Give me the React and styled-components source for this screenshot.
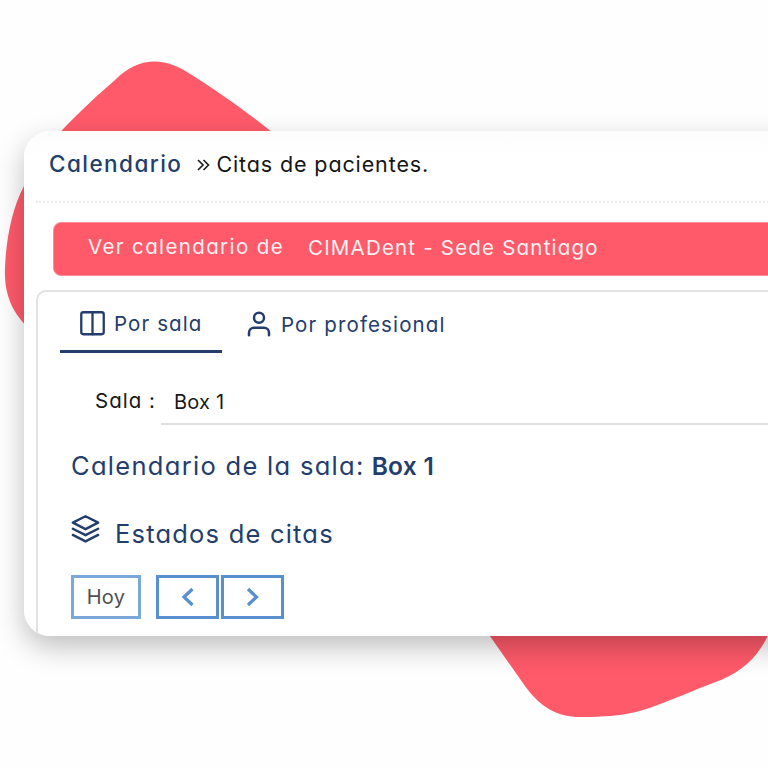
import React from "react";
import styled, { createGlobalStyle } from "styled-components";

const navy = "#233d6d";
const coral = "#ff5a6a";

const GlobalStyle = createGlobalStyle`
  * { box-sizing: border-box; }
  body { margin: 0; background: #fefefe; }
`;

const Page = styled.main`
  position: relative;
  width: 768px;
  height: 768px;
  padding: 131px 0 0 24px;
  overflow: hidden;
  background: #fefefe;
  font-family: "Inter", "Open Sans", sans-serif;
  font-feature-settings: "cv11", "calt" 0;
`;

const Backdrop = styled.svg`
  position: absolute;
  inset: 0;
  fill: ${coral};
`;

const Card = styled.section`
  position: relative;
  width: 800px;
  height: 505px;
  padding-left: 12px;
  border-radius: 26px;
  overflow: hidden;
  background: linear-gradient(#fcfcfc, #ffffff 28px);
  box-shadow: 0 11px 28px rgba(0, 0, 0, 0.25);
`;

const Text = styled.span`
  flex: none;
  white-space: pre;
  line-height: 30px;
  font-size: ${(p) => p.$size || 20}px;
  font-weight: ${(p) => p.$weight || 400};
  letter-spacing: ${(p) => p.$track || 0}px;
  color: ${(p) => p.$color || navy};
  margin-left: ${(p) => p.$gap || 0}px;
  margin-top: ${(p) => p.$drop || 0}px;
`;

const Breadcrumb = styled.header`
  display: flex;
  align-items: flex-start;
  height: 72px;
  padding: 18px 0 0 13px;
  border-bottom: 2px dotted #ececec;
`;

const Chevrons = styled.svg`
  flex: none;
  width: 13px;
  height: 14px;
  margin: 9px 0 0 15px;
`;

const Banner = styled.div`
  display: flex;
  align-items: flex-start;
  height: 54px;
  margin: 19px 0 0 17px;
  padding: 9px 0 0 34px;
  border: 1px solid #ff8d98;
  border-radius: 8px;
  background: ${coral};
`;

const Panel = styled.div`
  height: 400px;
  margin-top: 14px;
  border: 2px solid #e1e2e3;
  border-radius: 10px;
  padding-left: 22px;
`;

const Tabs = styled.nav`
  display: flex;
  height: 61px;
`;

const Tab = styled.div`
  display: flex;
  align-items: flex-start;
  width: ${(p) => p.$width}px;
  padding: 17px 0 0 ${(p) => p.$inset}px;
  border-bottom: 3px solid ${(p) => (p.$active ? navy : "transparent")};
`;

const Icon = styled.svg`
  flex: none;
  width: ${(p) => p.$size}px;
  height: ${(p) => p.$size}px;
  fill: none;
  stroke: ${(p) => p.$color || navy};
  stroke-width: ${(p) => p.$stroke || 2};
  stroke-linecap: round;
  stroke-linejoin: round;
`;

const Field = styled.div`
  display: flex;
  align-items: flex-start;
  padding: 32px 0 0 35px;
`;

const Select = styled.div`
  display: flex;
  flex: 1;
  height: 40px;
  margin-left: 5px;
  padding-left: 13px;
  border-bottom: 2px solid #dfdfdf;
`;

const Heading = styled.h2`
  display: flex;
  align-items: flex-start;
  margin: 26px 0 0 11px;
`;

const Legend = styled.div`
  display: flex;
  align-items: flex-start;
  height: 68px;
  margin: 32px 0 0 10px;
`;

const Controls = styled.div`
  display: flex;
  margin-left: 11px;
  margin-top: -6px;
`;

const Button = styled.button`
  display: flex;
  align-items: center;
  justify-content: center;
  width: ${(p) => p.$width}px;
  height: 44px;
  margin: 0 ${(p) => p.$after || 0}px 0 0;
  padding: 0;
  border: 3px solid ${(p) => p.$border};
  background: #fff;
  font: inherit;
  font-feature-settings: inherit;
`;

export default function App() {
  return (
    <>
      <GlobalStyle />
      <Page>
        <Backdrop width="768" height="768" viewBox="0 0 768 768">
          <path d="M50 143C72 119 94 98 115 80C138 57 163 57 187 72C213 88 243 109 272 132L290 150V300L40 337C10 317 4 291 5 268C6 240 12 208 24 186Z" />
          <path d="M485 629L525 686C541 708 558 717 580 717C609 717 632 715 655 706C682 696 699 688 721 680C746 670 761 652 769 633V620H485Z" />
        </Backdrop>
        <Card>
          <Breadcrumb>
            <Text $size={22.5} $weight={500} $track={1.45}>Calendario</Text>
            <Chevrons viewBox="0 0 13 14" fill="none" stroke="#222" strokeWidth="1.7">
              <path d="M1 2L6 7L1 12M6.5 2L11.5 7L6.5 12" />
            </Chevrons>
            <Text $size={21.5} $track={0.88} $gap={6} $color="#151515">Citas de pacientes.</Text>
          </Breadcrumb>
          <Banner>
            <Text $size={20.5} $color="#fff0f1" $track={1.38}>Ver calendario de</Text>
            <Text $size={20.5} $color="#fff0f1" $track={1.2} $gap={24} $drop={1}>CIMADent - Sede Santiago</Text>
          </Banner>
          <Panel>
            <Tabs>
              <Tab $active $width={162} $inset={18}>
                <Icon $size={29} viewBox="0 0 24 24" $stroke={1.9}>
                  <rect x="2.7" y="2.7" width="18.6" height="18.2" rx="1.8" />
                  <path d="M12 2.7V20.9" />
                </Icon>
                <Text $size={20.5} $track={1.1} $gap={7}>Por sala</Text>
              </Tab>
              <Tab $width={230} $inset={22}>
                <Icon $size={30} viewBox="0 0 24 24">
                  <path d="M20 21V19a4 4 0 0 0-4-4H8a4 4 0 0 0-4 4v2" />
                  <circle cx="12" cy="7" r="4" />
                </Icon>
                <Text $size={20.5} $track={1.13} $gap={7} $drop={1}>Por profesional</Text>
              </Tab>
            </Tabs>
            <Field>
              <Text $color="#181818" $size={20.5} $track={1} $drop={1}>Sala :</Text>
              <Select>
                <Text $color="#181818" $track={0.2} $drop={2}>Box 1</Text>
              </Select>
            </Field>
            <Heading>
              <Text $size={25.5} $track={1.3}>Calendario de la sala:</Text>
              <Text $size={24.5} $weight={600} $gap={7} $track={0.3}>Box 1</Text>
            </Heading>
            <Legend>
              <Icon $size={31} viewBox="0 0 24 24" $stroke={1.9}>
                <path d="M12 2.5L2.2 7.5l9.8 5 9.8-5-9.8-5zM2.2 17l9.8 5 9.8-5M2.2 12.2l9.8 5 9.8-5" />
              </Icon>
              <Text $size={25.5} $track={1.2} $gap={14} $drop={6}>Estados de citas</Text>
            </Legend>
            <Controls>
              <Button $width={70} $border="#7aa8da" $after={15}>
                <Text $color="#505050" $track={0.3}>Hoy</Text>
              </Button>
              <Button $width={63} $border="#588fcf" $after={2}>
                <Icon $size={20} $color="#588fcf" $stroke={3.2} viewBox="0 0 20 20">
                  <path d="M14.5 2L6 10L14.5 18" strokeLinecap="butt" strokeLinejoin="miter" />
                </Icon>
              </Button>
              <Button $width={63} $border="#588fcf">
                <Icon $size={20} $color="#588fcf" $stroke={3.2} viewBox="0 0 20 20">
                  <path d="M5 2L13.5 10L5 18" strokeLinecap="butt" strokeLinejoin="miter" />
                </Icon>
              </Button>
            </Controls>
          </Panel>
        </Card>
      </Page>
    </>
  );
}
